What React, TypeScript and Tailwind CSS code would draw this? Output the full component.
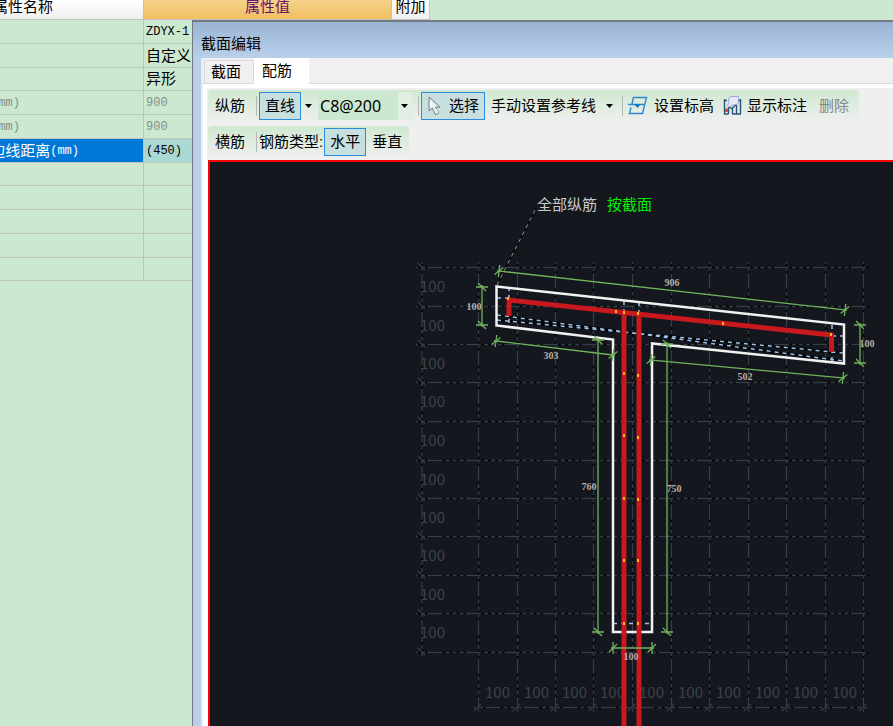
import React from "react";

interface PropertyRow {
	name?: string;
	unit?: string;
	value?: string;
	kind: "normal" | "muted" | "selected";
	nameClass?: string;
	cjk?: boolean;
}

const ROWS: PropertyRow[] = [
	{ value: "ZDYX-1", kind: "normal" },
	{ value: "自定义", kind: "normal", cjk: true },
	{ value: "异形", kind: "normal", cjk: true },
	{ unit: "(mm)", value: "900", kind: "muted", nameClass: "pr-[123px]" },
	{ unit: "(mm)", value: "900", kind: "muted", nameClass: "pr-[123px]" },
	{
		name: "边线距离",
		unit: "(mm)",
		value: "(450)",
		kind: "selected",
		nameClass: "pr-16",
	},
	{ kind: "normal" },
	{ kind: "normal" },
	{ kind: "normal" },
	{ kind: "normal" },
	{ kind: "normal" },
];

const NAME_STYLES = {
	normal: "text-black",
	muted: "text-[#868f88]",
	selected: "bg-[#0078d7] text-white",
};

const VALUE_STYLES = {
	normal: "text-black",
	muted: "text-[#868f88]",
	selected: "bg-[#acd8d3] text-black",
};

function PropertyTable() {
	return (
		<table className="w-full table-fixed border-separate border-spacing-0">
			<colgroup>
				<col className="w-36" />
				<col className="w-[248px]" />
				<col className="w-[38px]" />
				<col />
			</colgroup>
			<thead>
				<tr className="h-5 text-[15px] leading-[14px]">
					<th className="border-r border-b border-[#c3c3c3] bg-linear-to-b from-white to-[#efefef] p-0 align-top font-normal">
						<div className="flex justify-end pr-[90px] whitespace-nowrap">
							属性名称
						</div>
					</th>
					<th className="border-r border-b border-[#c3c3c3] bg-linear-to-b from-[#f6d28b] to-[#f1bf60] p-0 align-top font-normal text-[#6d106b]">
						属性值
					</th>
					<th className="border-r border-b border-[#c3c3c3] bg-linear-to-b from-white to-[#efefef] p-0 align-top font-normal whitespace-nowrap">
						附加
					</th>
					<th className="p-0" />
				</tr>
			</thead>
			<tbody>
				{ROWS.map((row, i) => (
					<tr key={i} className="h-6 nth-[4n+3]:h-[23px]">
						<td
							className={`border-r border-b border-[#bfc3bf] p-0 ${NAME_STYLES[row.kind]}`}
						>
							<div
								className={`flex items-center justify-end text-[15px] leading-5 whitespace-nowrap ${row.nameClass ?? ""}`}
							>
								{row.name}
								<span className="font-['Liberation_Mono',monospace] text-xs">
									{row.unit}
								</span>
							</div>
						</td>
						<td
							className={`border-r border-b border-[#bfc3bf] py-0 pr-0 pl-0.5 ${VALUE_STYLES[row.kind]}`}
						>
							<div
								className={
									row.cjk
										? "text-[15px] leading-5"
										: "font-['Liberation_Mono',monospace] text-xs leading-5"
								}
							>
								{row.value}
							</div>
						</td>
						<td colSpan={2} className="p-0" />
					</tr>
				))}
			</tbody>
		</table>
	);
}

function Caret() {
	return (
		<svg className="h-1 w-[7px] shrink-0" viewBox="0 0 7 4" aria-hidden="true">
			<path d="M0 0h7L3.500 4z" fill="#000" />
		</svg>
	);
}

function Separator() {
	return <div className="h-5 w-px shrink-0 bg-[#b4b9b4]" />;
}

interface ToolButtonProps {
	active?: boolean;
	disabled?: boolean;
	className?: string;
	children: React.ReactNode;
}

function ToolButton({
	active = false,
	disabled = false,
	className = "px-[5px]",
	children,
}: ToolButtonProps) {
	const stateClass = active
		? "border border-[#2a8ddd] bg-[#c8dfdf]"
		: "border border-transparent";
	return (
		<button
			type="button"
			disabled={disabled}
			aria-pressed={active}
			className={`flex h-7 shrink-0 items-center whitespace-nowrap disabled:text-[#858585] ${stateClass} ${className}`}
		>
			{children}
		</button>
	);
}

function CursorIcon() {
	return (
		<svg className="h-5 w-4" viewBox="0 0 16 20" aria-hidden="true">
			<path
				d="M2 1v14l3.300-3 3.200 6.800 3.200-1.700-3.200-6H13z"
				fill="#e8eef0"
				stroke="#747b80"
				strokeWidth="1"
			/>
			<path d="M4 5v6M6 8l3 3M9 13l2 4" stroke="#fff" strokeWidth="1" />
		</svg>
	);
}

function ElevationIcon() {
	return (
		<svg className="h-5 w-5" viewBox="0 0 20 20" aria-hidden="true">
			<path
				d="M4 8L5.500 1.500H18.500L14.500 17.500H1.500L3 11.500M0 8.500h16.500"
				fill="none"
				stroke="#2c87cc"
				strokeWidth="1.400"
			/>
			<path d="M6 8h7L9.500 12z" fill="#1579cc" />
		</svg>
	);
}

function AnnotationIcon() {
	return (
		<svg className="h-5 w-5" viewBox="0 0 20 20" aria-hidden="true">
			<path
				d="M1.500 3v15.500M5.500 11v7M1.500 18h4M9.500 12v6.500M9.500 18h8.500M13.500 9v9M17.500 3v15.500M1 4.500h3M15 4.500h3"
				fill="none"
				stroke="#28537e"
				strokeWidth="1.400"
			/>
			<path
				d="M6 1.500 8 .5h7.500v6.500l-2.500 2H9l-3 2.500-1.500-1.500 1-2.500z"
				fill="#e4e8f6"
				stroke="#8f9cc0"
				strokeWidth="0.800"
			/>
			<path d="M6 11l2.500 1.500 4.500-3.500" fill="none" stroke="#344f78" strokeWidth="1.300" />
			<path d="M2 12.500h3v3.500h-3z" fill="#e34c20" />
		</svg>
	);
}

const V_LINES = [478, 517, 555, 593, 632, 671, 709, 748, 786, 825, 863];
const H_LINES = [267, 306, 344, 382, 421, 460, 498, 536, 575, 613, 652];

const BAR_DOTS = [
	[508, 298],
	[616, 311],
	[624, 312],
	[638, 313],
	[723, 323],
	[831, 334],
	[624, 373],
	[638, 375],
	[624, 435],
	[638, 437],
	[624, 498],
	[638, 499],
	[624, 560],
	[638, 560],
	[624, 623],
	[638, 623],
];

interface GridLineProps {
	x1: number;
	y1: number;
	x2: number;
	y2: number;
}

function GridLine(line: GridLineProps) {
	return (
		<g>
			<line {...line} stroke="#030405" />
			<line
				{...line}
				stroke="#343e46"
				strokeDasharray="15 3 4 3 4 3 4 2.500"
				strokeDashoffset="27"
			/>
		</g>
	);
}

function AxisGrid() {
	return (
		<g strokeWidth="1.400">
			{V_LINES.map((x) => (
				<GridLine key={x} x1={x + 0.5} y1={262} x2={x + 0.5} y2={713} />
			))}
			{H_LINES.map((y) => (
				<GridLine key={y} x1={416} y1={y + 0.5} x2={869} y2={y + 0.5} />
			))}
			<GridLine x1={422} y1={262} x2={422} y2={656} />
			<GridLine x1={474} y1={707.5} x2={867} y2={707.5} />
			<g stroke="#323c44">
				{H_LINES.map((y) => (
					<path key={y} d={`M418 ${y - 4}l7 7`} />
				))}
				{V_LINES.map((x) => (
					<path key={x} d={`M${x - 4} 711l7 -7`} />
				))}
			</g>
			<g
				fill="#3a434b"
				fontSize="15"
				fontFamily="'Noto Sans CJK SC', sans-serif"
			>
				{H_LINES.slice(0, -1).map((y) => (
					<text key={y} x={420} y={y + 25}>
						100
					</text>
				))}
				{V_LINES.slice(0, -1).map((x) => (
					<text key={x} x={x + 7} y={698}>
						100
					</text>
				))}
			</g>
		</g>
	);
}

interface DimensionProps {
	from: [number, number];
	to: [number, number];
	label: string;
	labelAt: [number, number];
}

function Dimension({ from, to, label, labelAt }: DimensionProps) {
	const length = Math.hypot(to[0] - from[0], to[1] - from[1]);
	const angle =
		(Math.atan2(to[1] - from[1], to[0] - from[0]) * 180) / Math.PI;
	return (
		<g>
			<g
				transform={`translate(${from[0]} ${from[1]}) rotate(${angle})`}
				fill="none"
				stroke="#70b35c"
				strokeWidth="1.300"
			>
				<path d={`M-2 0H${length + 2}M0 -6V6M${length} -6V6`} />
				<path d={`M-4 4L4 -4M${length - 4} 4l8 -8`} />
			</g>
			<text
				x={labelAt[0]}
				y={labelAt[1]}
				textAnchor="middle"
				fill="#b5adad"
				fontSize="10"
				fontWeight="bold"
				fontFamily="'Liberation Serif', serif"
			>
				{label}
			</text>
		</g>
	);
}

function SectionDrawing() {
	return (
		<svg
			className="h-full w-full"
			viewBox="210 162 683 564"
			preserveAspectRatio="xMinYMin slice"
			role="img"
			aria-label="异形截面配筋图"
		>
			<AxisGrid />

			{/* leader from the wall corner to the note */}
			<path d="M497 285L536 208" stroke="#050505" strokeWidth="1.500" />
			<path d="M497 285L536 208" stroke="#9a9a9a" strokeDasharray="4 4" />

			{/* cover lines */}
			<g fill="none" strokeWidth="1.500">
				<path
					d="M497 320L843 353M497 315L843 361"
					stroke="#020304"
					strokeWidth="2.500"
				/>
				<path
					d="M497 320L843 353M497 315L843 361M509 287V327M624 301V313M639 302V313M832 325V363M497 298H509M832 336H844M613 623.500H652"
					stroke="#9cc3ea"
					strokeDasharray="4 4"
				/>
			</g>

			<path
				d="M496.500 286.500L844 324.500V363.500L652 343.500V632H613V339.500L496.500 325.500Z"
				fill="none"
				stroke="#f2f2f2"
				strokeWidth="2.500"
			/>

			<g fill="none" stroke="#c9181e" strokeWidth="5">
				<path d="M509 316V300L831.500 335V352" />
				<path d="M624 312V740M639 313V740" />
			</g>
			{BAR_DOTS.map(([x, y]) => (
				<rect
					key={`${x}-${y}`}
					x={x - 1}
					y={y - 1}
					width="2"
					height="3"
					fill="#f5b820"
				/>
			))}

			<Dimension from={[499, 271]} to={[845, 310]} label="906" labelAt={[672, 286]} />
			<Dimension from={[482, 325]} to={[482, 287]} label="100" labelAt={[474, 310]} />
			<Dimension from={[496, 341]} to={[613, 355]} label="303" labelAt={[551, 359]} />
			<Dimension from={[598, 340]} to={[598, 632]} label="760" labelAt={[589, 490]} />
			<Dimension from={[667, 344]} to={[667, 632]} label="750" labelAt={[674, 492]} />
			<Dimension from={[651, 360]} to={[843, 378]} label="502" labelAt={[745, 380]} />
			<Dimension from={[860, 325]} to={[860, 363]} label="100" labelAt={[867, 347]} />
			<Dimension from={[613, 648]} to={[652, 648]} label="100" labelAt={[631, 660]} />

			<g fontSize="15">
				<text x="537" y="210" fill="#c9c9c9">
					全部纵筋
				</text>
				<text x="607" y="210" fill="#00f000">
					按截面
				</text>
			</g>
		</svg>
	);
}

function Toolbars() {
	return (
		<div className="flex flex-col items-start gap-1 bg-[#efefef] pt-0.5 pb-0.5 pl-px">
			<div className="flex h-8 shrink-0 items-center rounded-sm bg-linear-to-b from-[#cfe9d1] to-[#efefef] pr-0.5 pl-[7px]">
				<span className="mr-[11px] whitespace-nowrap">纵筋</span>
				<Separator />
				<ToolButton active className="ml-0.5 px-[5px]">
					直线
				</ToolButton>
				<button type="button" aria-label="直线选项" className="flex h-7 items-center px-1">
					<Caret />
				</button>
				<div className="relative mr-1.5 ml-0.5 flex h-7 w-[94px] shrink-0 items-center justify-end bg-linear-to-r from-[#cce8cf] from-85% to-[#e2eee3] to-85% pr-1">
					<select
						aria-label="纵筋规格"
						className="absolute inset-0 w-full appearance-none bg-transparent pl-0.5 font-['Noto_Sans',sans-serif] text-base"
					>
						<option>C8@200</option>
					</select>
					<Caret />
				</div>
				<Separator />
				<ToolButton active className="ml-0.5 gap-1.5 px-[5px]">
					<CursorIcon />
					选择
				</ToolButton>
				<ToolButton>手动设置参考线</ToolButton>
				<button
					type="button"
					aria-label="参考线选项"
					className="mr-[5px] flex h-7 items-center px-1"
				>
					<Caret />
				</button>
				<Separator />
				<ToolButton className="gap-1.5 px-1">
					<ElevationIcon />
					设置标高
				</ToolButton>
				<ToolButton className="gap-1 px-[3px]">
					<AnnotationIcon />
					显示标注
				</ToolButton>
				<ToolButton disabled className="px-[7px]">
					删除
				</ToolButton>
			</div>
			<div className="flex h-8 shrink-0 items-center rounded-sm bg-linear-to-b from-[#cfe9d1] to-[#efefef] pr-px pl-[7px]">
				<span className="mr-[11px] whitespace-nowrap">横筋</span>
				<Separator />
				<span className="mr-px ml-0.5 whitespace-nowrap">钢筋类型:</span>
				<ToolButton active>水平</ToolButton>
				<ToolButton>垂直</ToolButton>
			</div>
		</div>
	);
}

function SectionEditor() {
	return (
		<section
			role="dialog"
			aria-labelledby="editor-title"
			className="absolute top-5 right-0 bottom-0 left-48 flex flex-col overflow-hidden border-t-2 border-l border-[#727982] bg-[#b9cfe9] text-[15px] leading-5"
		>
			<header className="flex h-9 shrink-0 items-center bg-linear-to-b from-[#99b4d2] to-[#b9d0eb] pt-2 pl-2">
				<h1 id="editor-title">截面编辑</h1>
			</header>
			<div className="ml-2 flex min-h-0 flex-1 flex-col border-l-2 border-[#e8edf3] bg-white">
				<div
					role="tablist"
					className="flex h-[26px] shrink-0 items-end border-b border-[#d9d9d9] bg-[#f0f0f0]"
				>
					<button
						type="button"
						role="tab"
						aria-selected="false"
						className="ml-px h-[23px] border border-b-0 border-[#d9d9d9] pr-3 pl-1.5 whitespace-nowrap"
					>
						截面
					</button>
					<button
						type="button"
						role="tab"
						aria-selected="true"
						className="-mb-px h-[26px] bg-white pr-[17px] pl-2 whitespace-nowrap"
					>
						配筋
					</button>
				</div>
				<div className="mt-1 ml-1 flex min-h-0 flex-1 flex-col">
					<Toolbars />
					<div className="ml-px min-h-0 flex-1 overflow-hidden border-t-2 border-l-2 border-[#ff0000] bg-[#14171e]">
						<SectionDrawing />
					</div>
				</div>
			</div>
		</section>
	);
}

export default function App() {
	return (
		<main className="relative min-h-screen overflow-hidden bg-[#cce8cf] font-['Liberation_Sans','Noto_Sans_CJK_SC',sans-serif] text-black">
			<PropertyTable />
			<SectionEditor />
		</main>
	);
}
